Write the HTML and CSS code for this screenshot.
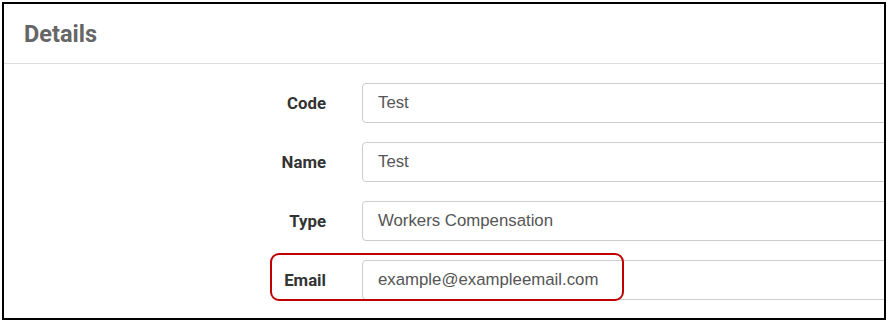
FILE: index.html
```html
<!DOCTYPE html>
<html lang="en">
<head>
     <meta charset="UTF-8">
     <meta name="viewport" content="width=device-width, initial-scale=1.0">
     <title>Details</title>
     <link rel="stylesheet" href="styles.css">
</head>
<body>
     <div class="frame">
          <div class="panel-head">
               <h3>Details</h3>
          </div>
          <div class="panel-body">
               <div class="row">
                    <label for="code">Code</label>
                    <input type="text" id="code" value="Test">
               </div>
               <div class="row">
                    <label for="name">Name</label>
                    <input type="text" id="name" value="Test">
               </div>
               <div class="row">
                    <label for="type">Type</label>
                    <input type="text" id="type" value="Workers Compensation">
               </div>
               <div class="row rela">
                    <label for="email">Email</label>
                    <input type="text" id="email" value="example@exampleemail.com">
                    <span class="highlight"></span>
               </div>
               <div class="row">
                    <label for="extra"></label>
                    <input type="text" id="extra" value="">
               </div>
          </div>
     </div>
</body>
</html>
```

FILE: styles.css
```css
*{
     padding:0;
     margin:0;
     box-sizing: border-box;
}
html,body{
     width:100%;
     height:100%;
     background:#fff;
}
.rela{position: relative;}

.frame{
     margin: 2px 0 0 2px;
     width: 884px;
     height: 318px;
     border: 2px solid #000;
     overflow: hidden;
     background: #fff;
}
.panel-head{
     height: 60px;
     padding-left: 20px;
     display: flex;
     align-items: center;
     border-bottom: 1px solid #ddd;
}
.panel-head h3{
     font-family: Roboto, sans-serif;
     font-size: 23.5px;
     font-weight: 700;
     color: #666;
}
.panel-body{
     padding-top: 19px;
     display: flex;
     flex-direction: column;
     gap: 19px;
}
.row{
     display: grid;
     grid-template-columns: 322px 700px;
     column-gap: 36px;
     align-items: center;
     height: 40px;
}
.row label{
     text-align: right;
     font-family: Roboto, sans-serif;
     font-size: 16.8px;
     font-weight: 700;
     color: #333;
}
.row input{
     height: 40px;
     border: 1px solid #ccc;
     border-radius: 4px;
     padding: 0 15px;
     font-family: "Liberation Sans", Arial, sans-serif;
     font-size: 16.8px;
     color: #555;
     outline: none;
     background: #fff;
}
.highlight{
     position: absolute;
     left: 266px;
     top: -7px;
     width: 354px;
     height: 48px;
     border: 2px solid #c00000;
     border-radius: 9px;
     pointer-events: none;
}
```
